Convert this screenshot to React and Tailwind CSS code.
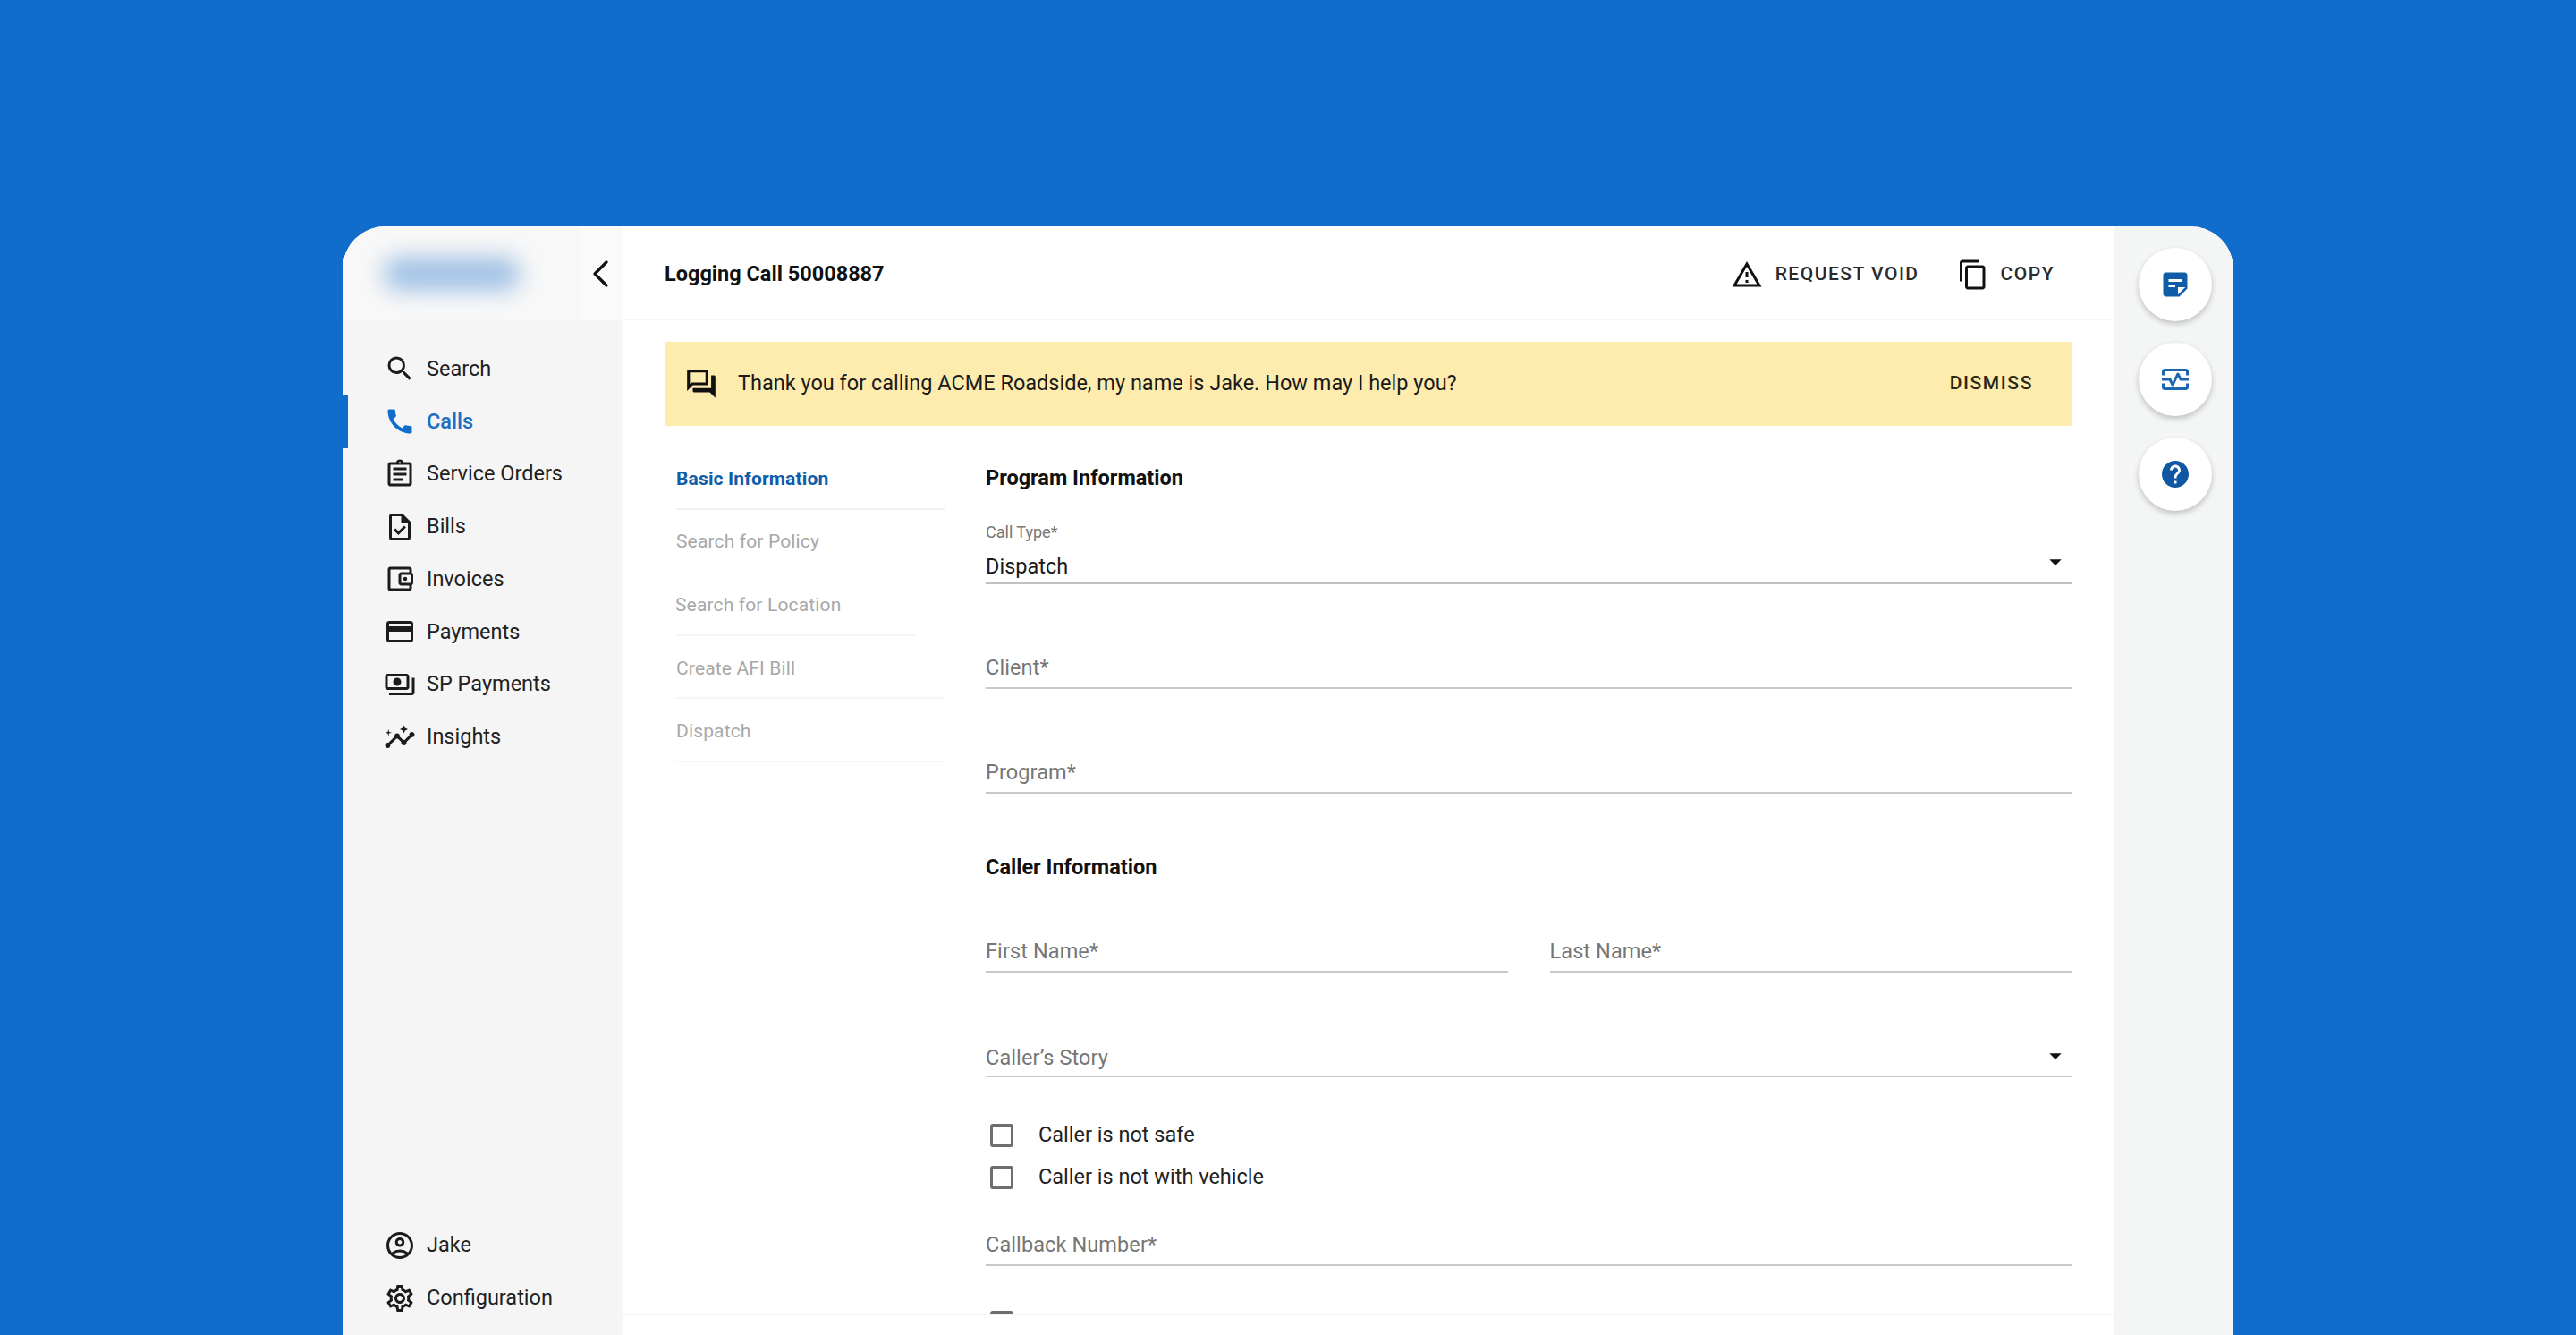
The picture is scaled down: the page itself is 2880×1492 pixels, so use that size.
import React from "react";
import {
  MdOutlineSearch, MdCall, MdOutlineAssignment, MdOutlineTask, MdOutlineAccountBalanceWallet,
  MdOutlineCreditCard, MdOutlinePayments, MdOutlineInsights, MdOutlineAccountCircle, MdOutlineSettings,
  MdOutlineWarningAmber, MdOutlineContentCopy, MdOutlineForum, MdStickyNote2,
  MdOutlineMonitorHeart, MdHelp, MdArrowDropDown,
} from "react-icons/md";

function NavItem({ icon: Icon, label, active }) {
  return (
    <div className={`flex items-center h-[58.75px] border-l-[6px] pl-[40px] ${active ? "border-[#116dcb] text-[#1f6fc0] font-medium" : "border-transparent text-[#212121]"}`}>
      <Icon className={`w-[36px] h-[36px] shrink-0 ${active ? "text-[#116dcb]" : "text-[#1c1c1c]"}`} />
      <span className="ml-[12px] -mt-[1px] text-[23.5px] leading-[30px]">{label}</span>
    </div>
  );
}

function Step({ label, active, line, short, indent }) {
  return (
    <div className={`h-[70.6px] flex items-center border-b-2 ${short ? "w-[267px]" : ""} ${line}`}>
      <span className={`text-[21px] leading-[28px] pt-[3px] tracking-[0.15px] ${indent ? "-ml-[1px]" : ""} ${active ? "font-bold text-[#0f5ca8]" : "text-[#a8a8a8]"}`}>{label}</span>
    </div>
  );
}

function Field({ label, mt, className = "", select, pb = "pb-[7px]" }) {
  return (
    <div className={`relative flex items-end justify-between border-b-2 border-[#c8c8c8] ${pb} ${mt} ${className}`}>
      <span className="text-[23.5px] leading-[30px] tracking-[0.1px] text-[#767676]">{label}</span>
      {select && <MdArrowDropDown className="absolute right-[2px] bottom-[6px] w-[32px] h-[32px] text-[#111]" />}
    </div>
  );
}

function Check({ label }) {
  return (
    <div className="flex items-center h-[47px]">
      <span className="w-[26px] h-[26px] ml-[5px] rounded-[3px] border-[3px] border-[#6e6e6e] shrink-0" />
      <span className="ml-[28px] -mt-[2px] text-[23.5px] leading-[30px] text-[#222]">{label}</span>
    </div>
  );
}

function Fab({ icon: Icon, color }) {
  return (
    <div className="w-[82px] h-[82px] rounded-full bg-white flex items-center justify-center shadow-[0_3px_6px_rgba(0,0,0,0.22)]">
      <Icon className={`w-[36px] h-[36px] ${color}`} />
    </div>
  );
}

export default function App() {
  return (
    <div className="h-[1492px] w-[2880px] overflow-hidden bg-[#116dcb] pt-[253px] pl-[383px] font-['Roboto',sans-serif]">
      <div className="w-[2114px] h-[1239px] rounded-t-[48px] overflow-hidden bg-white flex">
        {/* Sidebar */}
        <aside className="w-[313px] shrink-0 bg-[#f5f5f5] flex flex-col">
          <div className="h-[105px] bg-[#f8f8f8] flex items-center">
            <div className="ml-[47px] w-[150px] h-[36px] rounded-[14px] bg-[#9dbfe4] blur-[13px]" />
            <div className="ml-auto w-[49px] h-full bg-[#fafafa] flex items-center">
              <svg viewBox="0 0 18 30" className="ml-[15px] w-[18px] h-[30px]" fill="none" stroke="#111" strokeWidth="3.2" strokeLinecap="round" strokeLinejoin="round">
                <path d="M16 2 L3 15 L16 28" />
              </svg>
            </div>
          </div>
          <nav className="pt-[25px]">
            <NavItem icon={MdOutlineSearch} label="Search" />
            <NavItem icon={MdCall} label="Calls" active />
            <NavItem icon={MdOutlineAssignment} label="Service Orders" />
            <NavItem icon={MdOutlineTask} label="Bills" />
            <NavItem icon={MdOutlineAccountBalanceWallet} label="Invoices" />
            <NavItem icon={MdOutlineCreditCard} label="Payments" />
            <NavItem icon={MdOutlinePayments} label="SP Payments" />
            <NavItem icon={MdOutlineInsights} label="Insights" />
          </nav>
          <div className="mt-auto mb-[12px]">
            <NavItem icon={MdOutlineAccountCircle} label="Jake" />
            <NavItem icon={MdOutlineSettings} label="Configuration" />
          </div>
        </aside>

        {/* Main */}
        <main className="flex-1 min-w-0 flex flex-col">
          <header className="h-[105px] shrink-0 border-b-2 border-[#f6f6f6] flex items-center pl-[47px] pr-[66px] pt-[4px]">
            <h1 className="text-[23.5px] font-bold text-[#111]">Logging Call 50008887</h1>
            <div className="ml-auto flex items-center text-[21px] tracking-[1.5px] text-[#2b2b2b] font-medium">
              <MdOutlineWarningAmber className="w-[36px] h-[36px] text-[#111]" />
              <span className="ml-[14px]">REQUEST VOID</span>
              <MdOutlineContentCopy className="w-[36px] h-[36px] ml-[42px] text-[#111]" />
              <span className="ml-[13px]">COPY</span>
            </div>
          </header>
          <div className="flex-1 min-h-0 overflow-hidden pl-[47px] pr-[47px] pt-[24px]">
            <div className="h-[94px] bg-[#feecae] flex items-center pl-[22px] pr-[43px]">
              <MdOutlineForum className="w-[38px] h-[38px] text-[#111]" />
              <span className="ml-[22px] text-[23.5px] text-[#1a1a1a]">Thank you for calling ACME Roadside, my name is Jake. How may I help you?</span>
              <span className="ml-auto text-[21px] tracking-[1.6px] font-medium text-[#2b2616]">DISMISS</span>
            </div>
            <div className="flex">
              <div className="w-[313px] shrink-0 pl-[13px] pt-[23px]">
                <Step label="Basic Information" active line="border-[#f0f0f0]" />
                <Step label="Search for Policy" line="border-transparent" />
                <Step label="Search for Location" line="border-[#f6f6f6]" short indent />
                <Step label="Create AFI Bill" line="border-[#f6f6f6]" />
                <Step label="Dispatch" line="border-[#f6f6f6]" />
              </div>
              <div className="flex-1 min-w-0 ml-[46px]">
                <h2 className="mt-[43px] text-[23.5px] leading-[30px] font-bold text-[#111]">Program Information</h2>
                <div className="mt-[36px] text-[18px] leading-[20px] text-[#767676]">Call Type*</div>
                <div className="relative h-[48px] flex items-end border-b-2 border-[#c0c0c0] pb-[3px]">
                  <span className="text-[23.5px] leading-[30px] text-[#1a1a1a]">Dispatch</span>
                  <MdArrowDropDown className="absolute right-[2px] bottom-[7px] w-[32px] h-[32px] text-[#111]" />
                </div>
                <Field label="Client*" mt="mt-[78px]" />
                <Field label="Program*" mt="mt-[78px]" />
                <h2 className="mt-[67px] text-[23.5px] leading-[30px] font-bold text-[#111]">Caller Information</h2>
                <div className="flex gap-[47px] mt-[64px]">
                  <Field label="First Name*" mt="" className="flex-1" />
                  <Field label="Last Name*" mt="" className="flex-1" />
                </div>
                <Field label="Caller’s Story" mt="mt-[80px]" pb="pb-[5px]" select />
                <div className="mt-[41px]">
                  <Check label="Caller is not safe" />
                  <Check label="Caller is not with vehicle" />
                </div>
                <Field label="Callback Number*" mt="mt-[37px]" />
                <span className="block w-[26px] h-[26px] mt-[50px] ml-[5px] rounded-[3px] border-[3px] border-[#6e6e6e]" />
              </div>
            </div>
          </div>
          <div className="h-[24px] shrink-0 border-t-2 border-[#f4f4f4] bg-white" />
        </main>

        {/* Right rail */}
        <aside className="w-[134px] shrink-0 bg-[#f4f5f5] flex flex-col items-center pt-[24px] pl-[4px] gap-[24px]">
          <Fab icon={MdStickyNote2} color="text-[#0f5ca8]" />
          <Fab icon={MdOutlineMonitorHeart} color="text-[#1a66b3]" />
          <Fab icon={MdHelp} color="text-[#0f56a3]" />
        </aside>
      </div>
    </div>
  );
}
